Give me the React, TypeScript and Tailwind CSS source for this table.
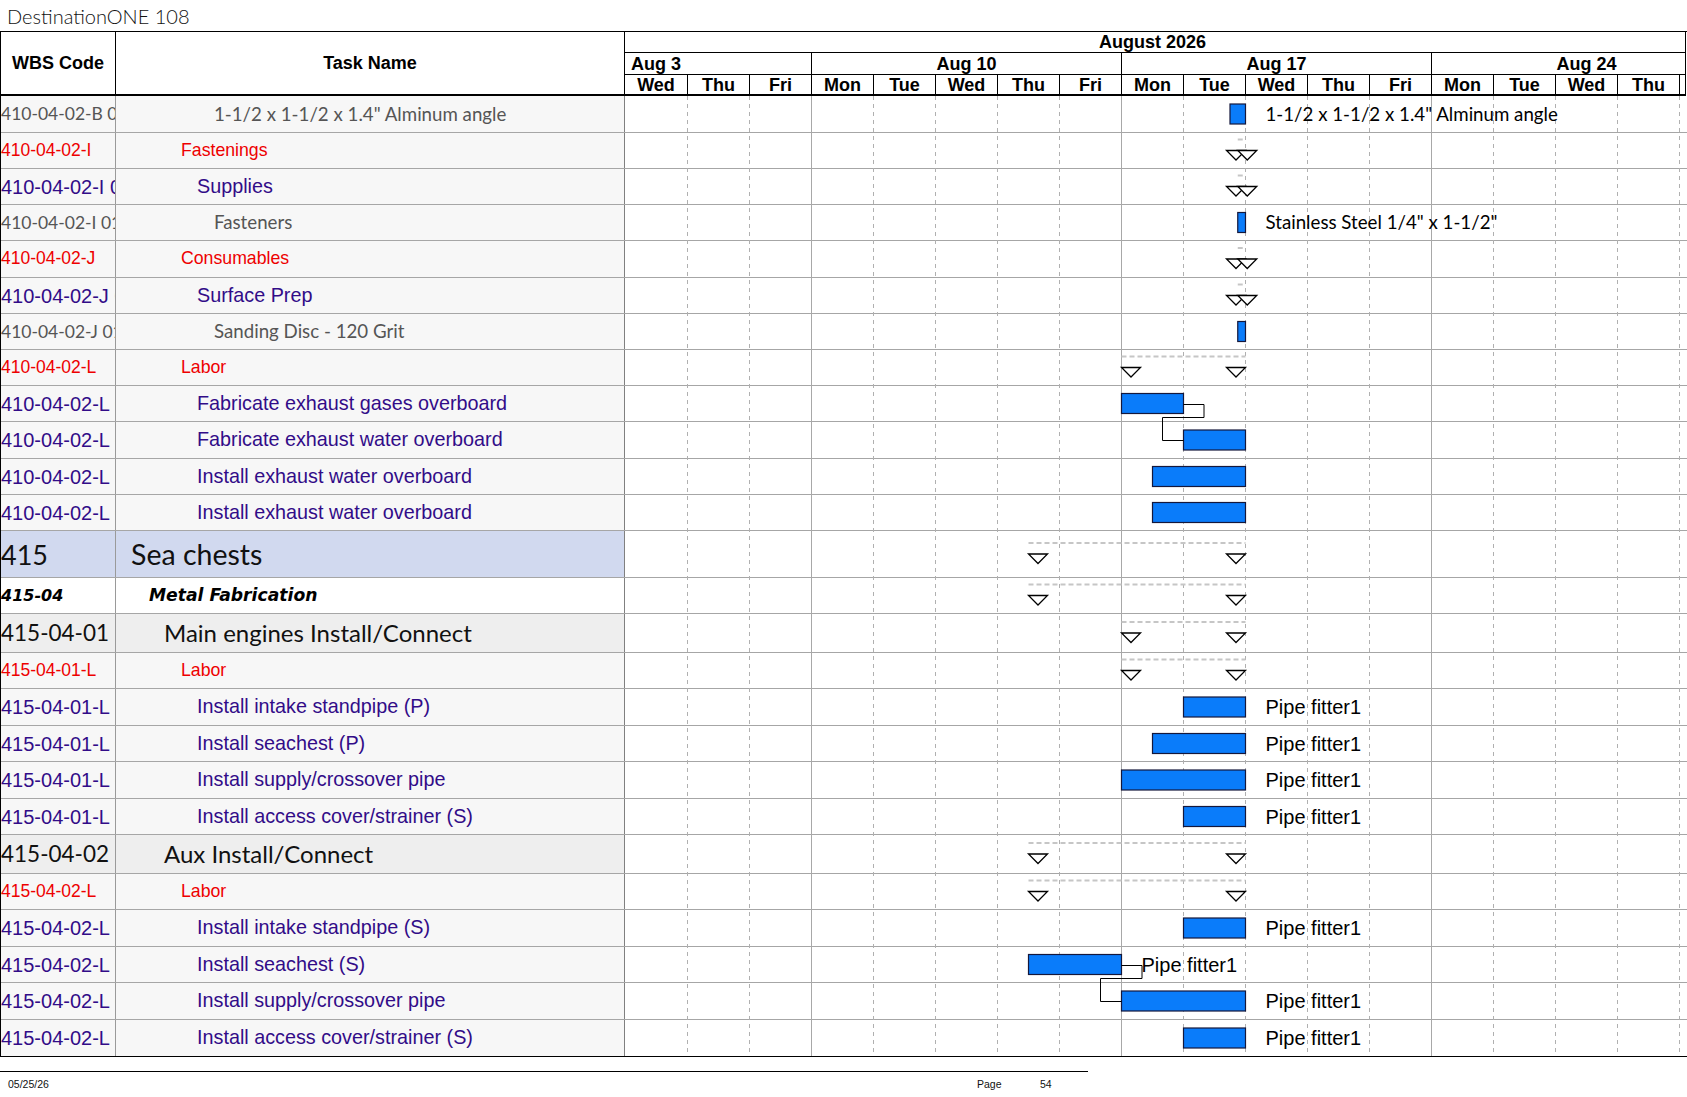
import React from 'react';

type RowType = 'gray' | 'red' | 'purple' | 'l1' | 'l2' | 'l3';

interface Row {
  wbs: string;
  name: string;
  t: RowType;
  h: number;
  bar?: [number, number];
  sum?: [number, number];
  label?: string;
  lf?: 'cal' | 'arial';
  last?: boolean;
}

const rows: Row[] = [
  { wbs: '410-04-02-B 01', name: '1-1/2 x 1-1/2 x 1.4" Alminum angle', t: 'gray', h: 37, bar: [9.75, 10], label: '1-1/2 x 1-1/2 x 1.4" Alminum angle', lf: 'cal' },
  { wbs: '410-04-02-I', name: 'Fastenings', t: 'red', h: 36, sum: [9.875, 10] },
  { wbs: '410-04-02-I 01', name: 'Supplies', t: 'purple', h: 36, sum: [9.875, 10] },
  { wbs: '410-04-02-I 01 01', name: 'Fasteners', t: 'gray', h: 36, bar: [9.875, 10], label: 'Stainless Steel 1/4" x 1-1/2"', lf: 'cal' },
  { wbs: '410-04-02-J', name: 'Consumables', t: 'red', h: 37, sum: [9.875, 10] },
  { wbs: '410-04-02-J 01', name: 'Surface Prep', t: 'purple', h: 36, sum: [9.875, 10] },
  { wbs: '410-04-02-J 01 01', name: 'Sanding Disc - 120 Grit', t: 'gray', h: 36, bar: [9.875, 10] },
  { wbs: '410-04-02-L', name: 'Labor', t: 'red', h: 36, sum: [8, 10] },
  { wbs: '410-04-02-L 01', name: 'Fabricate exhaust gases overboard', t: 'purple', h: 36, bar: [8, 9] },
  { wbs: '410-04-02-L 02', name: 'Fabricate exhaust water overboard', t: 'purple', h: 37, bar: [9, 10] },
  { wbs: '410-04-02-L 03', name: 'Install exhaust water overboard', t: 'purple', h: 36, bar: [8.5, 10] },
  { wbs: '410-04-02-L 04', name: 'Install exhaust water overboard', t: 'purple', h: 36, bar: [8.5, 10] },
  { wbs: '415', name: 'Sea chests', t: 'l1', h: 47, sum: [6.5, 10] },
  { wbs: '415-04', name: 'Metal Fabrication', t: 'l2', h: 36, sum: [6.5, 10] },
  { wbs: '415-04-01', name: 'Main engines Install/Connect', t: 'l3', h: 39, sum: [8, 10] },
  { wbs: '415-04-01-L', name: 'Labor', t: 'red', h: 36, sum: [8, 10] },
  { wbs: '415-04-01-L 01', name: 'Install intake standpipe (P)', t: 'purple', h: 37, bar: [9, 10], label: 'Pipe fitter1', lf: 'arial' },
  { wbs: '415-04-01-L 02', name: 'Install seachest (P)', t: 'purple', h: 36, bar: [8.5, 10], label: 'Pipe fitter1', lf: 'arial' },
  { wbs: '415-04-01-L 03', name: 'Install supply/crossover pipe', t: 'purple', h: 37, bar: [8, 10], label: 'Pipe fitter1', lf: 'arial' },
  { wbs: '415-04-01-L 04', name: 'Install access cover/strainer (S)', t: 'purple', h: 36, bar: [9, 10], label: 'Pipe fitter1', lf: 'arial' },
  { wbs: '415-04-02', name: 'Aux Install/Connect', t: 'l3', h: 39, sum: [6.5, 10] },
  { wbs: '415-04-02-L', name: 'Labor', t: 'red', h: 36, sum: [6.5, 10] },
  { wbs: '415-04-02-L 01', name: 'Install intake standpipe (S)', t: 'purple', h: 37, bar: [9, 10], label: 'Pipe fitter1', lf: 'arial' },
  { wbs: '415-04-02-L 02', name: 'Install seachest (S)', t: 'purple', h: 36, bar: [6.5, 8], label: 'Pipe fitter1', lf: 'arial' },
  { wbs: '415-04-02-L 03', name: 'Install supply/crossover pipe', t: 'purple', h: 37, bar: [8, 10], label: 'Pipe fitter1', lf: 'arial' },
  { wbs: '415-04-02-L 04', name: 'Install access cover/strainer (S)', t: 'purple', h: 37, bar: [9, 10], label: 'Pipe fitter1', lf: 'arial', last: true },
];

const hCls: Record<number, string> = {
  36: 'h-[36px]',
  37: 'h-[37px]',
  39: 'h-[39px]',
  47: 'h-[47px]',
};

const wbsCls: Record<RowType, string> = {
  gray: "font-['Lato',sans-serif] text-[17.5px] text-[#555555]",
  red: "font-['Liberation_Sans',Arial,sans-serif] text-[17.5px] text-[#ee0000]",
  purple: "font-['Liberation_Sans',Arial,sans-serif] text-[20px] text-[#320c88]",
  l1: "font-['Lato',sans-serif] text-[27px] text-[#111111]",
  l2: "font-['DejaVu_Sans',sans-serif] text-[16px] font-bold italic text-black",
  l3: "font-['Lato',sans-serif] text-[22.5px] text-[#111111]",
};

const nameCls: Record<RowType, string> = {
  gray: "pl-[98px] font-['Lato',sans-serif] text-[18.7px] text-[#555555]",
  red: "pl-[65px] font-['Liberation_Sans',Arial,sans-serif] text-[17.7px] text-[#ee0000]",
  purple: "pl-[81px] font-['Liberation_Sans',Arial,sans-serif] text-[19.8px] text-[#320c88]",
  l1: "pl-[15px] font-['Lato',sans-serif] text-[28.5px] text-[#111111]",
  l2: "pl-[33px] font-['DejaVu_Sans',sans-serif] text-[17.2px] font-bold italic text-black",
  l3: "pl-[48px] font-['Lato',sans-serif] text-[24px] text-[#111111]",
};

const bgCls: Record<RowType, string> = {
  gray: 'bg-[#f7f7f7]',
  red: 'bg-[#f7f7f7]',
  purple: 'bg-[#f7f7f7]',
  l1: 'bg-[#d1d9ef]',
  l2: 'bg-white',
  l3: 'bg-[#eeeeee]',
};

const D = 62;
const X = (d: number) => D * d + 0.5;

const days = ['Wed', 'Thu', 'Fri', 'Mon', 'Tue', 'Wed', 'Thu', 'Fri', 'Mon', 'Tue', 'Wed', 'Thu', 'Fri', 'Mon', 'Tue', 'Wed', 'Thu'];

function Triangle({ x, y }: { x: number; y: number }) {
  return (
    <polygon
      points={`${x},${y} ${x + 19},${y} ${x + 9.5},${y + 9.5}`}
      fill="#ffffff"
      stroke="#000000"
      strokeWidth={1.3}
    />
  );
}

export default function App() {
  let acc = 0;
  const laid = rows.map((r) => {
    const top = acc;
    acc += r.h;
    return { ...r, top, c: top + (r.h - 1) / 2 };
  });
  const bodyH = acc;

  const connectors: [number, number][] = [
    [8, 9],
    [23, 24],
  ];

  return (
    <div className="w-[1687px] h-[1097px] bg-white relative overflow-hidden font-['Liberation_Sans',Arial,sans-serif] text-black">
      <div className="h-[31px] flex items-center pl-[7px] font-['Lato',sans-serif] font-light text-[20px] text-[#111111]">
        DestinationONE 108
      </div>

      <div className="border-t border-l border-black">
        {/* Header */}
        <div className="flex h-[64px]">
          <div className="w-[115px] shrink-0 border-r border-b-2 border-black flex items-center justify-center font-bold text-[18px] leading-none">
            WBS Code
          </div>
          <div className="w-[509px] shrink-0 border-r border-b-2 border-black flex items-center justify-center font-bold text-[18px] leading-none">
            Task Name
          </div>
          <div className="w-[1061px] shrink-0 border-r border-black flex flex-col overflow-hidden">
            <div className="h-[21px] shrink-0 border-b border-black flex">
              <div className="w-[1055px] shrink-0 flex items-center justify-center font-bold text-[18px] leading-none">
                August 2026
              </div>
            </div>
            <div className="h-[22px] shrink-0 border-b border-black flex">
              <div className="w-[187px] shrink-0 border-r border-black flex items-center pl-[6px] font-bold text-[18px] leading-none">
                Aug 3
              </div>
              <div className="w-[310px] shrink-0 border-r border-black flex items-center justify-center font-bold text-[18px] leading-none">
                Aug 10
              </div>
              <div className="w-[310px] shrink-0 border-r border-black flex items-center justify-center font-bold text-[18px] leading-none">
                Aug 17
              </div>
              <div className="w-[310px] shrink-0 border-r border-black flex items-center justify-center font-bold text-[18px] leading-none">
                Aug 24
              </div>
            </div>
            <div className="h-[21px] shrink-0 border-b-2 border-black flex">
              {days.map((d, i) => (
                <div
                  key={i}
                  className={
                    (i === 0 ? 'w-[63px] ' : 'w-[62px] ') +
                    'shrink-0 border-r border-black flex items-center justify-center font-bold text-[18px] leading-none'
                  }
                >
                  {d}
                </div>
              ))}
              <div className="flex-1" />
            </div>
          </div>
        </div>

        {/* Body */}
        <div className="relative">
          {laid.map((r, i) => (
            <div
              key={i}
              className={
                'flex border-b ' + hCls[r.h] + ' ' + (r.last ? 'border-black' : 'border-[#a6a6a6]')
              }
            >
              <div
                className={
                  'w-[115px] shrink-0 border-r border-[#9a9a9a] overflow-hidden whitespace-nowrap flex items-center leading-none ' +
                  bgCls[r.t] + ' ' + wbsCls[r.t]
                }
              >
                {r.wbs}
              </div>
              <div
                className={
                  'w-[509px] shrink-0 border-r border-[#808080] overflow-hidden whitespace-nowrap flex items-center leading-none ' +
                  bgCls[r.t] + ' ' + nameCls[r.t]
                }
              >
                {r.name}
              </div>
              <div className="flex-1 bg-white" />
            </div>
          ))}

          {/* Gantt overlay */}
          <div className="absolute left-[624px] top-0 w-[1062px] h-[961px] pointer-events-none">
            <svg width={1062} height={bodyH} className="absolute left-0 top-0 overflow-visible">
              {Array.from({ length: 17 }, (_, j) => j + 1).map((k) => {
                const week = k === 3 || k === 8 || k === 13;
                return (
                  <line
                    key={k}
                    x1={X(k)}
                    x2={X(k)}
                    y1={0}
                    y2={bodyH - 1}
                    stroke={week ? '#a8a8a8' : '#b0b0b0'}
                    strokeWidth={1}
                    strokeDasharray={week ? undefined : '4 4'}
                  />
                );
              })}

              {laid.map((r, i) =>
                r.sum ? (
                  <g key={'s' + i}>
                    <line
                      x1={X(r.sum[0])}
                      x2={X(r.sum[1])}
                      y1={r.c - 11}
                      y2={r.c - 11}
                      stroke="#c6c6c6"
                      strokeWidth={2}
                      strokeDasharray="5 3"
                    />
                    <Triangle x={X(r.sum[1]) - 19} y={r.c} />
                    <Triangle x={X(r.sum[0])} y={r.c} />
                  </g>
                ) : null
              )}

              {laid.map((r, i) =>
                r.bar ? (
                  <rect
                    key={'b' + i}
                    x={X(r.bar[0])}
                    y={r.c - 10}
                    width={X(r.bar[1]) - X(r.bar[0])}
                    height={20}
                    fill="#0a7cfa"
                    stroke="#14183c"
                    strokeWidth={1.2}
                  />
                ) : null
              )}

              {connectors.map(([a, b], i) => {
                const ra = laid[a];
                const rb = laid[b];
                const xe = X(ra.bar![1]);
                const xs = X(rb.bar![0]);
                const mid = ra.top + ra.h - 1 - 4 + 0.5;
                const p = `M ${xe} ${Math.round(ra.c) + 0.5} H ${xe + 20.5} V ${mid} H ${xs - 21} V ${Math.round(rb.c) + 0.5} H ${xs}`;
                return <path key={'c' + i} d={p} fill="none" stroke="#000000" strokeWidth={1} />;
              })}
            </svg>

            {laid.map((r, i) =>
              r.label && r.bar ? (
                <div
                  key={'l' + i}
                  className={
                    'absolute flex items-center whitespace-nowrap leading-none text-black ' +
                    (r.lf === 'cal'
                      ? "font-['Lato',sans-serif] text-[18.7px] text-[#111111]"
                      : "font-['Liberation_Sans',Arial,sans-serif] text-[20px]")
                  }
                  style={{ left: X(r.bar[1]) + 20, top: r.top, height: r.h - 1 }}
                >
                  {r.label}
                </div>
              ) : null
            )}
          </div>
        </div>
      </div>

      {/* Footer */}
      <div className="mt-[14px] w-[1088px] border-t border-black" />
      <div className="h-[25px] flex items-center pl-[8px] text-[10.5px] text-[#111111]">
        <span className="w-[969px] shrink-0">05/25/26</span>
        <span className="w-[63px] shrink-0">Page</span>
        <span>54</span>
      </div>
    </div>
  );
}
